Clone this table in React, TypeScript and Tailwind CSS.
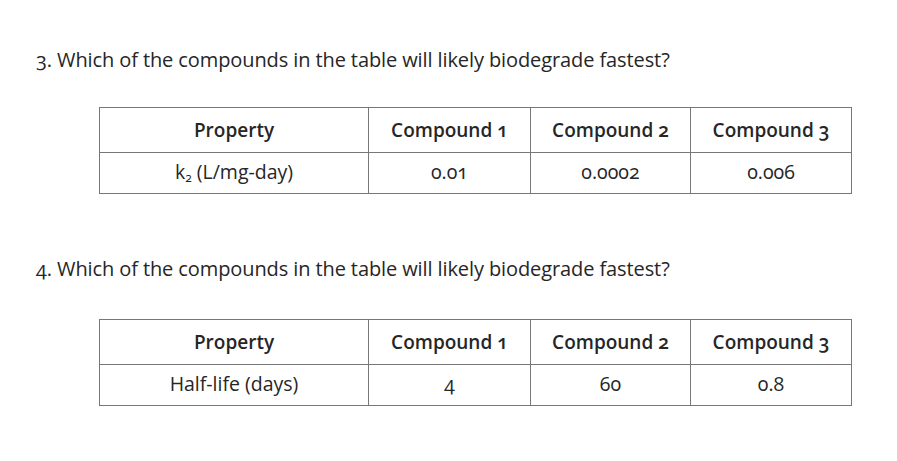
const tables = [
  {
    question: "3. Which of the compounds in the table will likely biodegrade fastest?",
    label: (
      <>
        k<sub className="text-[12px] align-baseline relative top-[3px]">2</sub> (L/mg-day)
      </>
    ),
    values: ["0.01", "0.0002", "0.006"],
  },
  {
    question: "4. Which of the compounds in the table will likely biodegrade fastest?",
    label: <>Half-life (days)</>,
    values: ["4", "60", "0.8"],
  },
];

const App = () => {
  return (
    <div className="w-[897px] h-[461px] bg-white text-[#262626] font-['Open_Sans',sans-serif] oldstyle-nums pt-[46px]">
      {tables.map((item, i) => (
        <div key={i} className={i === 0 ? "mb-[61px]" : ""}>
          <p className="pl-[36px] text-[20px] leading-[28px] tracking-[-0.1px]">{item.question}</p>
          <table
            className={`ml-[99px] border-collapse border border-[#777] text-center ${
              i === 0 ? "mt-[33px]" : "mt-[36px]"
            }`}
          >
            <thead>
              <tr className="h-[45px]">
                <th className="w-[269px] border border-[#777] font-semibold text-[19px]">Property</th>
                <th className="w-[162px] border border-[#777] font-semibold text-[19px]">Compound 1</th>
                <th className="w-[160px] border border-[#777] font-semibold text-[19px]">Compound 2</th>
                <th className="w-[161px] border border-[#777] font-semibold text-[19px]">Compound 3</th>
              </tr>
            </thead>
            <tbody>
              <tr className="h-[41px]">
                <td className="border border-[#777] text-[19.5px] pb-[2px]">{item.label}</td>
                {item.values.map((v) => (
                  <td key={v} className="border border-[#777] text-[19.5px] pb-[2px]">
                    {v}
                  </td>
                ))}
              </tr>
            </tbody>
          </table>
        </div>
      ))}
    </div>
  );
};

export default App;
